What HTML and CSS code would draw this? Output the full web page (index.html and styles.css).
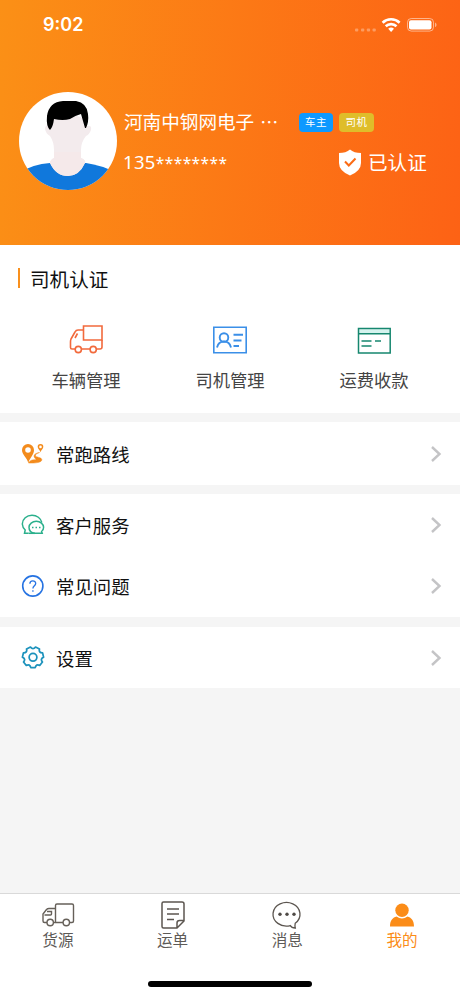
FILE: index.html
```html
<!DOCTYPE html>
<html lang="zh-CN">
<head>
<meta charset="utf-8">
<title>我的</title>
<link rel="stylesheet" href="styles.css">
</head>
<body>
<div class="app">
  <header class="header">
    <div class="status">
      <span class="time">9:02</span>
      <svg class="status-icons" width="84" height="18" viewBox="0 0 84 18">
        <g fill="#fff" fill-opacity=".32"><rect x="1" y="12.500" width="3.300" height="3" rx="1"/><rect x="7" y="12.500" width="3.300" height="3" rx="1"/><rect x="12.800" y="12.500" width="3.300" height="3" rx="1"/><rect x="18.500" y="12.500" width="3.300" height="3" rx="1"/></g>
        <g fill="none" stroke="#fff" stroke-width="2.600"><path d="M28.600 6.700a12.300 12.300 0 0 1 17 0"/><path d="M31.700 10.300a7.800 7.800 0 0 1 10.800 0"/></g>
        <path d="M34.200 12.800a4.300 4.300 0 0 1 5.800 0L37.100 16z" fill="#fff"/>
        <rect x="53.500" y="2.500" width="26" height="12.600" rx="3.800" fill="none" stroke="#fff" stroke-opacity=".5"/>
        <rect x="55" y="4.200" width="22.500" height="9.200" rx="2" fill="#fff"/>
        <path d="M81 6.500c2 .8 2 3.800 0 4.600z" fill="#fff" fill-opacity=".5"/>
      </svg>
    </div>
    <div class="profile">
      <svg class="avatar" width="98" height="98" viewBox="0 0 98 98">
        <defs><clipPath id="face"><circle cx="49" cy="49" r="49"/></clipPath></defs>
        <g clip-path="url(#face)">
          <rect width="98" height="98" fill="#fff"/>
          <path d="M0 81Q14 72 31 71H67Q82 73 98 81V98H0z" fill="#1078dc"/>
          <path d="M30 27Q48 19 67 27L68 34Q73 33 72 38Q70 43 67 44Q62 50 62 58V66Q67 68 66 71Q60 84 49 84Q37 84 31 71Q31 68 35 66V58Q35 50 31 44Q27 42 26 37Q26 33 30 33z" fill="#f3ebed"/>
          <path d="M35 60H62V66Q67 68 66 71Q60 84 49 84Q37 84 31 71Q31 68 35 66z" fill="#f5e9ea"/>
          <path d="M31 38Q27 34 28 24Q30 10 44 9H57Q68 11 69 22Q70 30 67 36H66L62 22Q55 24 51 27Q44 29 35 27Q34 35 31 38z" fill="#000"/>
        </g>
      </svg>
      <div class="info">
        <div class="name-row">
          <span class="name">河南中钢网电子</span><span class="more">⋯</span>
          <span class="tag tag-owner">车主</span>
          <span class="tag tag-driver">司机</span>
        </div>
        <div class="phone-row">
          <span class="phone">135<span class="mask">********</span></span>
          <svg width="24" height="27" viewBox="0 0 24 27"><path d="M12 .5Q16 4 23 4V14Q23 22 12 26.500Q1 22 1 14V4Q8 4 12 .5z" fill="#fff"/><path d="M7 12.500l3.800 4L17.500 9.500" fill="none" stroke="#fb6b14" stroke-width="2"/></svg>
          <span class="verified">已认证</span>
        </div>
      </div>
    </div>
  </header>

  <section class="card services">
    <h2 class="title">司机认证</h2>
    <div class="grid">
      <div class="service">
        <svg width="36" height="32" viewBox="0 0 36 32" fill="none" stroke="#f26a3c" stroke-width="1.600"><path d="M15.500 2H34V16H15.500z"/><path d="M15.500 6H10Q8 6 7 8L3 15Q2.500 16 2.500 18V23.500Q2.500 25 4 25H7M13.500 25H22M28.500 25H32Q34 25 34 23V16"/><path d="M9.500 9.500L7 14"/><circle cx="10.300" cy="25.500" r="3.100"/><circle cx="25.200" cy="25.500" r="3.100"/></svg>
        <span>车辆管理</span>
      </div>
      <div class="service">
        <svg width="36" height="32" viewBox="0 0 36 32" fill="none" stroke="#3b8fe8" stroke-width="1.600"><path d="M1.800 3.300H34.200V28.700H1.800z"/><circle cx="12" cy="13.500" r="4.300" stroke-width="1.900"/><path d="M5 23.500C6 19 8 17.500 12 17.500S18 19 19 23.500M21.500 10.800H31M21.500 16.500H29.500M21.500 22H27" stroke-width="1.900"/></svg>
        <span>司机管理</span>
      </div>
      <div class="service">
        <svg width="36" height="32" viewBox="0 0 36 32" fill="none" stroke="#16876f" stroke-width="1.500"><path d="M3 5.300H33.500V9.500H3z" fill="#d5f3ee" stroke="none"/><path d="M2.500 4.500H34.200V29H2.500zM2.500 9.700H34.200M5.500 17H15.500M19 17H25M5.500 22H15.500"/></svg>
        <span>运费收款</span>
      </div>
    </div>
  </section>

  <section class="card route">
    <div class="row">
      <svg width="24" height="24" viewBox="0 0 24 24"><path fill-rule="evenodd" fill="#f38b1c" d="M7 2A6 6 0 0 0 1 8C1 12.500 6 15.500 7.300 21C9 15.500 13 12.500 13 8A6 6 0 0 0 7 2zM7 5.200A2.800 2.800 0 1 1 7 10.800A2.800 2.800 0 0 1 7 5.200zM19.500 2A2.800 2.800 0 0 0 16.700 5C16.700 7 19 8 19.500 10.200C20 8 22.300 7 22.300 5A2.800 2.800 0 0 0 19.500 2zM19.500 3.600A1.300 1.300 0 1 1 19.500 6.200A1.300 1.300 0 0 1 19.500 3.600z"/><path d="M18.500 10.500C15.500 11.500 14 12.500 14.500 14C15 15.500 20.500 15 20.800 17.500C21 20.500 15 21.300 7.500 21C9 18.500 11 17.500 14.500 17.800C16 17.700 13 16 13 14C13.200 12 15.500 11 18.500 10.500z" fill="#f38b1c" stroke="#f38b1c" stroke-width=".5"/></svg>
      <span class="label">常跑路线</span>
      <svg class="arrow" width="12" height="18" viewBox="0 0 12 18"><path d="M2 2l7.500 7L2 16"/></svg>
    </div>
  </section>

  <section class="card help">
    <div class="row">
      <svg width="24" height="24" viewBox="0 0 24 24" fill="none" stroke="#2bb08c" stroke-width="1.500"><path d="M7.500 20.300H3.500L4.200 17A8.800 8.800 0 0 1 1.300 11A9.800 8.900 0 0 1 11 2.200A10 9 0 0 1 20.800 9.500"/><path d="M7.500 20.300H14"/><path d="M8 14.300A7.300 6 0 0 1 22.600 14.300Q22.600 17 20.600 18.500L21.200 20.300H14Q8 20 8 14.300z"/><path d="M11 14.500h1.500M14.500 14.500h1.500M18 14.500h1.500" stroke-width="1.700"/></svg>
      <span class="label">客户服务</span>
      <svg class="arrow" width="12" height="18" viewBox="0 0 12 18"><path d="M2 2l7.500 7L2 16"/></svg>
    </div>
    <div class="row">
      <svg width="24" height="24" viewBox="0 0 24 24" fill="none" stroke="#2673e2" stroke-width="1.600"><circle cx="11.800" cy="12" r="10.100"/><path d="M8.900 9.700C8.900 5.800 14.700 5.900 14.700 9.500C14.700 11.800 11.900 11.800 11.900 14.500M11.900 16.200v1.600" stroke-width="1.300"/></svg>
      <span class="label">常见问题</span>
      <svg class="arrow" width="12" height="18" viewBox="0 0 12 18"><path d="M2 2l7.500 7L2 16"/></svg>
    </div>
  </section>

  <section class="card settings">
    <div class="row">
      <svg width="24" height="24" viewBox="0 0 24 24" fill="none" stroke="#1c92bc" stroke-width="1.800" stroke-linejoin="round"><g transform="translate(12 11.300) scale(.97)"><path d="M2.580-10.590L6.670-8.620Q5.710-4.550 9.890-4.590L10.900-.17Q7.120 1.630 9.750 4.880L6.920 8.420Q3.170 6.580 2.270 10.660H-2.270Q-3.170 6.580-6.920 8.420L-9.750 4.880Q-7.120 1.630-10.900-.17L-9.890-4.590Q-5.710-4.550-6.670-8.620L-2.580-10.590Q0-7.300 2.580-10.590z"/><circle r="4"/></g></svg>
      <span class="label">设置</span>
      <svg class="arrow" width="12" height="18" viewBox="0 0 12 18"><path d="M2 2l7.500 7L2 16"/></svg>
    </div>
  </section>

  <nav class="tabbar">
    <div class="tabs">
      <div class="tab">
        <svg width="34" height="30" viewBox="0 0 34 30" fill="none" stroke="#666059" stroke-width="1.400"><path d="M14.500 22.500V5.500Q14.500 4 16 4H31Q32.500 4 32.500 5.500V21Q32.500 22.500 31 22.500H29M22 22.500H12.500M6 22.500H3.500Q2 22.500 2 21V14L5.500 9.500Q6.500 8.500 8 8.500H14.500M3.500 15H9.500Q10.500 15 10.500 14V11.500H6"/><circle cx="9.200" cy="22.500" r="3.200"/><circle cx="25.300" cy="22.500" r="3.200"/></svg>
        <span>货源</span>
      </div>
      <div class="tab">
        <svg width="34" height="30" viewBox="0 0 34 30" fill="none" stroke="#5c5650" stroke-width="1.500"><path d="M7.500 2H26Q28 2 28 4V21L21 28H7.500Q6 28 6 26.500V3.500Q6 2 7.500 2zM28 20.500H23.500Q21 20.500 21 23V28M11 9H23M11 14H23M11 19.500H18"/></svg>
        <span>运单</span>
      </div>
      <div class="tab">
        <svg width="34" height="30" viewBox="0 0 34 30" fill="none" stroke="#5c5650" stroke-width="1.300"><path d="M25.200 23.300Q24.700 25.500 25.300 28Q21.500 27.700 20.300 25.600A13.500 11.800 0 1 1 25.200 23.300z"/><g fill="#4f4a46" stroke="none"><circle cx="10" cy="14.200" r="1.700"/><circle cx="17" cy="14.200" r="1.700"/><circle cx="24" cy="14.200" r="1.700"/></g></svg>
        <span>消息</span>
      </div>
      <div class="tab active">
        <svg width="34" height="30" viewBox="0 0 34 30" fill="#fb8c18"><circle cx="17" cy="10.300" r="6.700"/><path d="M5 26.500C5 20 8 17.500 11.500 16.500Q17 20.500 22.500 16.500C26 17.500 29 20 29 26.500z"/></svg>
        <span>我的</span>
      </div>
    </div>
    <div class="home-bar"></div>
  </nav>
</div>
</body>
</html>
```

FILE: styles.css
```css
* { box-sizing: border-box; }

body {
  margin: 0;
  font-family: "Noto Sans CJK SC", sans-serif;
  color: #111;
  background: #f5f5f5;
}

svg { display: block; flex: none; }

.app {
  display: flex;
  flex-direction: column;
  height: 996px;
}

.header {
  height: 245px;
  flex: none;
  color: #fff;
  background: linear-gradient(95deg, #fb9016, #fd6215);
}

.status {
  display: flex;
  justify-content: space-between;
  align-items: center;
  height: 50px;
  padding: 0 22px 0 43px;
}

.time {
  font: 600 18px/24px Inter, sans-serif;
}

.profile {
  display: flex;
  gap: 7px;
  padding: 42px 0 0 19px;
}

.info {
  flex: 1;
  padding-top: 15px;
}

.name-row,
.phone-row {
  display: flex;
  align-items: center;
  height: 28px;
  line-height: 28px;
  white-space: nowrap;
}

.name { font-size: 18.6px; }

.more {
  width: 44.5px;
  padding-left: 6px;
  font-size: 18px;
}

.tag {
  width: 34.5px;
  height: 19px;
  margin: 2px 6px 0 0;
  border-radius: 4px;
  font-size: 10.5px;
  line-height: 18px;
  letter-spacing: .5px;
  text-align: center;
}

.tag-owner { background: #0d99ff; }
.tag-driver { background: #dfbd2a; }

.phone-row { margin-top: 13px; }

.phone {
  width: 215px;
  margin-left: -1px;
  font: 18.5px/28px "Noto Sans", sans-serif;
  letter-spacing: .3px;
}

.mask {
  font-size: 15.5px;
  letter-spacing: .45px;
}

.verified {
  margin-left: 6px;
  font-size: 19.6px;
}

.card {
  flex: none;
  background: #fff;
}

.services {
  height: 168px;
  padding-top: 19px;
}

.title {
  display: flex;
  align-items: center;
  gap: 10px;
  height: 28px;
  margin: 0 0 0 17.5px;
  font-size: 19.6px;
  font-weight: 400;
}

.title::before {
  content: "";
  width: 2.5px;
  height: 20px;
  background: #f9901d;
}

.grid {
  display: grid;
  grid-template-columns: repeat(3, 144px);
  padding: 32px 0 0 14px;
}

.service {
  display: flex;
  flex-direction: column;
  align-items: center;
  gap: 11px;
  color: #444;
  font-size: 17.3px;
  line-height: 26px;
}

.route,
.help,
.settings { margin-top: 9px; }

.route { height: 63px; padding-top: 1px; }
.help { height: 123px; }
.settings { height: 61px; margin-top: 10px; }

.row {
  display: flex;
  align-items: center;
  height: 62px;
  padding: 0 18px 0 21px;
}

.help .row { height: 61.5px; }

.label {
  flex: 1;
  margin-left: 11px;
  font-size: 18.4px;
  line-height: 28px;
}

.arrow {
  fill: none;
  stroke: #c4c4c6;
  stroke-width: 2.4;
}

.tabbar {
  display: flex;
  flex-direction: column;
  justify-content: space-between;
  height: 103px;
  margin-top: auto;
  padding: 6px 0 9px;
  border-top: 1px solid #d9d9d9;
  background: #fff;
}

.tabs {
  display: grid;
  grid-template-columns: repeat(4, 114.7px);
  padding-left: .6px;
}

.tab {
  display: flex;
  flex-direction: column;
  align-items: center;
  color: #5d5a57;
  font-size: 15.6px;
  line-height: 18px;
}

.active { color: #fb8c18; }

.home-bar {
  align-self: center;
  width: 164px;
  height: 6px;
  border-radius: 3px;
  background: #000;
}
```
